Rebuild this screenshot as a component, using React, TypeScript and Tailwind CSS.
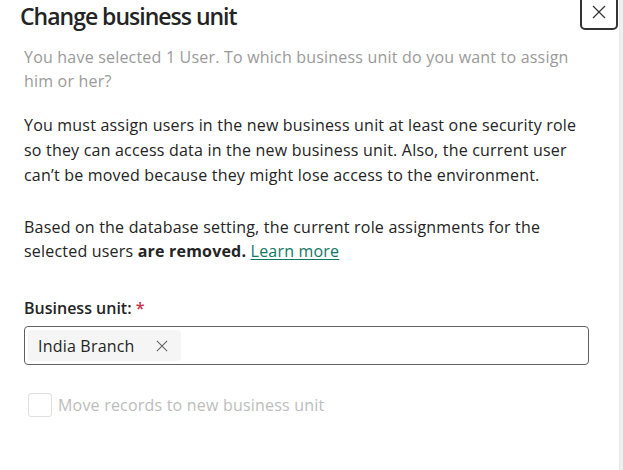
function Cross({ size, className }: { size: number; className?: string }) {
  return (
    <svg width={size} height={size} viewBox="0 0 14 14" className={className} fill="none" stroke="currentColor" strokeWidth={1.2}>
      <path d="M1 1L13 13M13 1L1 13" />
    </svg>
  )
}

export default function App() {
  return (
    <div
      className="flex w-[623px] h-[470px] bg-white overflow-hidden text-[#242424]"
      style={{ fontFamily: '"Open Sans", Lato, sans-serif' }}
    >
      {/* Dialog body */}
      <div className="flex-1 min-w-0 flex flex-col">
        {/* Header */}
        <div className="flex items-start pl-[20px] pr-[1px]">
          <h1 className="flex-1 text-[23px] leading-[32px] font-semibold tracking-[-1px]">Change business unit</h1>
          <button className="w-[38px] h-[40px] -mt-[10px] border-2 border-[#333333] rounded-[5px] flex items-center justify-center pt-[3px]">
            <Cross size={14} className="text-[#333333]" />
          </button>
        </div>

        <div className="pl-[24px] pr-[30px] text-[16px] tracking-[0.2px]">
          <p className="mt-[13px] leading-[24px] text-[#9a9a9a]">
            You have selected 1 User. To which business unit do you want to assign him or her?
          </p>

          <p className="mt-[20px] leading-[25px]">
            You must assign users in the new business unit at least one security role so they can access data in the new
            business unit. Also, the current user can’t be moved because they might lose access to the environment.
          </p>

          <p className="mt-[27px] leading-[24px]">
            Based on the database setting, the current role assignments for the selected users{' '}
            <span className="font-bold">are removed.</span>{' '}
            <a href="#" className="text-[#117865] underline underline-offset-2">
              Learn more
            </a>
          </p>

          {/* Business unit field */}
          <div className="mt-[35px]">
            <label className="block leading-[20px] font-semibold tracking-[0px]">
              Business unit: <span className="text-[#c4314b]">*</span>
            </label>
            <div className="mt-[8px] h-[39px] border border-[#616161] rounded-[4px] flex items-center px-[3px]">
              <div className="h-[31px] w-[153px] bg-[#f5f5f5] rounded-[4px] flex items-center pl-[10px]">
                <span>India Branch</span>
                <Cross size={12} className="ml-auto mr-[13px] text-[#616161]" />
              </div>
            </div>
          </div>

          {/* Checkbox */}
          <div className="mt-[28px] flex items-center pl-[4px]">
            <div className="w-[24px] h-[24px] border border-[#e0e0e0] rounded-[3px]" />
            <span className="ml-[6px] text-[#bdbdbd]">Move records to new business unit</span>
          </div>
        </div>
      </div>

      {/* Scrollbar gutter */}
      <div className="w-[4px] h-full bg-[#f0f0f0] border-l border-[#e6e6e6]" />
    </div>
  )
}
